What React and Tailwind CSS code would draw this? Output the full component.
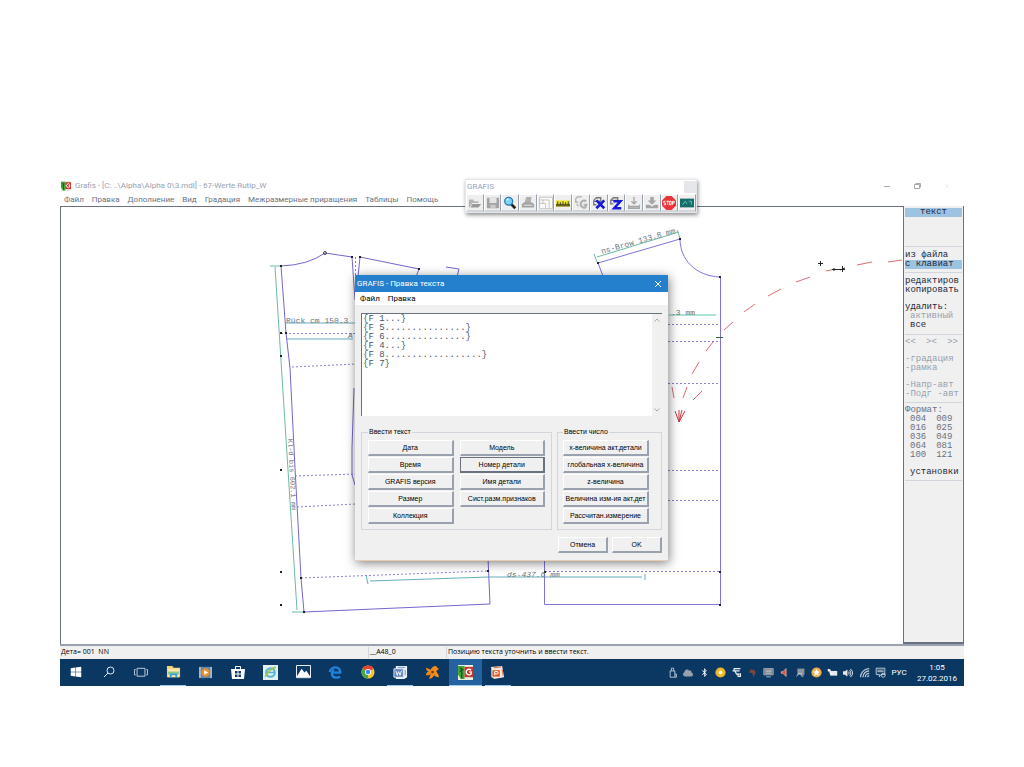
import React from 'react';
import { FaWindows, FaBluetoothB, FaCloud, FaVolumeUp } from 'react-icons/fa';

const menuItems = [
  'Файл',
  'Правка',
  'Дополнение',
  'Вид',
  'Градация',
  'Межразмерные приращения',
  'Таблицы',
  'Помощь',
];

const textButtons = [
  ['Дата', 'Время', 'GRAFIS версия', 'Размер', 'Коллекция'],
  ['Модель', 'Номер детали', 'Имя детали', 'Сист.разм.признаков'],
];

const numberButtons = [
  'x-величина акт.детали',
  'глобальная x-величина',
  'z-величина',
  'Величина изм-ия акт.дет',
  'Рассчитан.измерение',
];

const formats = [
  ['004', '009'],
  ['016', '025'],
  ['036', '049'],
  ['064', '081'],
  ['100', '121'],
];

const templateText = [
  '{F 1...}',
  '{F 5...............}',
  '{F 6...............}',
  '{F 4...}',
  '{F 8..................}',
  '{F 7}',
  '',
].join('\n');

const GrafisLogo = ({ className }) => (
  <svg viewBox="0 0 16 16" className={className}>
    <rect width="16" height="16" fill="#e8efe0" />
    <path d="M0 1h7v14H3l-3-5z" fill="#3fa535" />
    <path d="M2 3l3 2-3 2M4 7v7" stroke="#145c1c" strokeWidth="1.500" fill="none" />
    <rect x="7" y="2" width="9" height="11" fill="#c8352b" />
    <path d="M14 5.500a3 3 0 1 0 0 4V7.500h-2" stroke="#fff" strokeWidth="1.500" fill="none" />
  </svg>
);

/* Toolbar icons, all on a 16x16 grid */
const tools = [
  {
    name: 'Открыть',
    icon: (
      <g fill="#b5b5b5">
        <path d="M1 4h5l1 2h5v2H5l-3 5H1z" />
        <path d="M5 9h10l-3 4H3z" fill="#999" />
      </g>
    ),
  },
  {
    name: 'Сохранить',
    icon: (
      <g>
        <path d="M1 2h14v12H1z" fill="#a3a3a3" />
        <path d="M4 2h8v6H4z" fill="#e4e4e4" />
        <path d="M5 10h6v4H5z" fill="#c9c9c9" />
      </g>
    ),
  },
  {
    name: 'Масштаб',
    icon: (
      <g>
        <path d="M9 9l5 5" stroke="#222" strokeWidth="3" />
        <circle cx="6.500" cy="6" r="4.500" fill="#7fd3f5" stroke="#2478b5" strokeWidth="1.500" />
        <path d="M4 5l2-2" stroke="#fff" strokeWidth="1.500" />
      </g>
    ),
  },
  {
    name: 'Печать',
    icon: (
      <g fill="#a3a3a3">
        <path d="M6 1h6l-1 7H4z" fill="#b0b0b0" />
        <path d="M1 9l3-2h8l3 2v4H1z" />
        <path d="M3 10.500h10" stroke="#eee" />
      </g>
    ),
  },
  {
    name: 'Лист',
    icon: (
      <g fill="#fafafa" stroke="#c0c0c0">
        <path d="M.500 1.500h15v13h-15z" />
        <path d="M.500 4.500h11v10M.500 8.500h7v6M4.500 4.500v4" fill="none" />
      </g>
    ),
  },
  {
    name: 'Измерить',
    icon: (
      <g>
        <path d="M0 5h16v7H0z" fill="#f1e72c" />
        <path d="M0 9h16v3H0z" fill="#6b6612" />
        <path d="M2 6v4M5 7v3M8 6v4M11 7v3M14 6v4" stroke="#333" />
      </g>
    ),
  },
  {
    name: 'Деталь G',
    icon: (
      <g fill="none" stroke="#b0b0b0" strokeWidth="1.500">
        <path d="M2 3l2-2h5M2 3v4h3M3 9l2 3" />
        <path d="M14 6a4 4 0 1 0-1 7l1-3h-3" strokeWidth="2.500" />
      </g>
    ),
  },
  {
    name: 'Деталь X',
    icon: (
      <g fill="none">
        <path d="M2 5l3-3h5v4H2v4h3" stroke="#777" strokeWidth="1.500" />
        <path d="M5 5l9 9M14 5l-9 9" stroke="#1818d8" strokeWidth="3" />
      </g>
    ),
  },
  {
    name: 'Деталь Z',
    icon: (
      <g fill="none">
        <path d="M2 5l3-3h5v3H2v4h3" stroke="#777" strokeWidth="1.500" />
        <path d="M5 6h8l-7 8h8" stroke="#1818d8" strokeWidth="3" />
      </g>
    ),
  },
  {
    name: 'Вставить',
    icon: (
      <g fill="none" stroke="#a5a5a5">
        <path d="M8 1v8M5 6l3 3 3-3" strokeWidth="1.500" />
        <path d="M2 10v4h12v-4M2 12h12" strokeWidth="1.500" />
      </g>
    ),
  },
  {
    name: 'Загрузить',
    icon: (
      <g fill="#a5a5a5">
        <path d="M6 1h4v4h3l-5 5-5-5h3z" />
        <path d="M1 10h4l3 2 3-2h4v4H1z" />
      </g>
    ),
  },
  {
    name: 'Стоп',
    icon: (
      <g>
        <path d="M5 0h6l5 5v6l-5 5H5l-5-5V5z" fill="#e8343a" />
        <path
          d="M4 6H2v2h2v2H2M5 6h3M6.500 6v4M8.500 6h2v4h-2zM12 10V6h2v2h-2"
          stroke="#fff"
          fill="none"
        />
      </g>
    ),
  },
  {
    name: 'Экран',
    icon: (
      <g>
        <path d="M0 3h16v10H0z" fill="#136e6a" />
        <path d="M3 10l3-4 2 3M10 6h3v4" stroke="#6fc9c0" fill="none" />
      </g>
    ),
  },
];

const ToolPalette = () => (
  <div className="absolute left-[405px] top-px w-[232px] border border-gray-200 bg-white shadow-[1px_2px_4px_rgba(0,0,0,0.45)]">
    <div className="flex h-[14px] items-center justify-between pl-px text-[8px] text-gray-400">
      <span>GRAFIS</span>
      <button aria-label="Закрыть панель" className="h-3 w-3 bg-gray-200" />
    </div>
    <div className="grid grid-cols-13 bg-[#efefef]">
      {tools.map((tool) => (
        <button
          key={tool.name}
          aria-label={tool.name}
          className="flex h-[18px] items-center justify-center border-b-2 border-r border-l border-t border-b-gray-300 border-r-gray-400 border-l-white border-t-white"
        >
          <svg viewBox="0 0 16 16" className="h-[14px] w-[14px]">
            {tool.icon}
          </svg>
        </button>
      ))}
    </div>
  </div>
);

/* Pattern pieces drawn in drawing units of the work area */
const Pattern = () => (
  <svg
    viewBox="61 207 842 437"
    preserveAspectRatio="xMinYMin slice"
    className="h-full w-full"
    fill="none"
  >
    {/* dimension lines */}
    <g stroke="#6fb8a6">
      <path d="M270 266h11M275 267L297 610M292 612h12" />
      <path d="M286 323h70M287 339h66" stroke="#6aa9bd" />
      <path d="M366 575l2 9M370 581L488 577H642M645 574v6" stroke="#63b0bb" />
      <path d="M597 257L679 232M594 254l3 8M677 230l3 8" />
      <path d="M669 315h47" stroke="#5cc8a8" />
    </g>

    {/* construction lines */}
    <g stroke="#8a80d8" strokeDasharray="2 2">
      <path d="M281 333.500h75M292 367L356 364M295 476L356 474M297 507L356 504" />
      <path d="M301 578L488 571M355.500 257v20" />
      <path d="M668 324.500h52M668 341.500h52M668 383.500h52M668 470.500h52M668 500.500h52M545 571.500h175" />
    </g>

    {/* back piece */}
    <g stroke="#7466cf">
      <path d="M281 266Q308 265 325 253L352 257L355 300" />
      <path d="M281 266L286 333L290 368L295 468L301 578L304 612L490 604L488 558" />
      <path d="M360 257L419 269L416 277M360 257L358 277M446 267L459 269L457 277" />
      <path d="M354 388L352 448V475L355 485" />
    </g>

    {/* front piece */}
    <g stroke="#7d75da">
      <path d="M603 276L598 263L680 239C680 259 695 276 720 277" />
      <path d="M720.500 277V604.500H544.500V558" />
    </g>
    <path d="M716 337.500h7" stroke="#2f5f3f" />

    <g fill="#222">
      <path d="M280 332h2v2h-2zM280 355h2v2h-2zM280 469h2v2h-2zM280 571h2v2h-2zM280 604h2v2h-2z" />
      <path d="M285 332h2v2h-2zM280 265h2v2h-2zM351 256h2v2h-2zM359 256h2v2h-2zM418 268h2v2h-2z" />
      <path d="M300 577h2v2h-2zM303 611h2v2h-2zM487 570h2v2h-2zM544 571h2v2h-2z" />
      <path d="M597 262h2v2h-2zM679 238h2v2h-2zM719 276h2v2h-2zM719 571h2v2h-2zM719 604h2v2h-2z" />
    </g>
    <circle cx="325" cy="253" r="1.500" stroke="#444" />

    {/* pointer arrow */}
    <g stroke="#e06a72">
      <path d="M902 260L888 262M872 262L857 265M835 269L826 271M810 277L796 282M781 289L768 296M755 304L744 312" />
      <path d="M733 322L724 330M713 342L706 351M699 362L692 374M687 387L683 398M702 391L693 400M672 387L674 398" />
      <path d="M675 411L679 422L685 411M679 410V422M682 410L679 422" stroke="#d8323c" />
    </g>
    <path d="M818 263.500h5M820.500 261v5M832 269.500h13M842.500 266v6M834 268v3M840 270l5-2" stroke="#222" />

    {/* dimension labels */}
    <g fill="#6b7682" fontSize="8" className="font-['Liberation_Mono']">
      <text x="286" y="323">Rück cm 150.3</text>
      <text x="348" y="338" fontStyle="italic">
        A
      </text>
      <text transform="translate(288 439) rotate(87)" fontSize="7">
        Kl-d bis 602.1 mm
      </text>
      <text transform="translate(602 254) rotate(-16)">ns-Brow 133.8 mm</text>
      <text x="671" y="315">.3 mm</text>
      <text x="507" y="577" fontStyle="italic">
        ds-437.6 mm
      </text>
    </g>
  </svg>
);

const SideItem = ({ children, muted, active, indent }) => (
  <button
    className={`block h-[9px] w-full whitespace-pre text-left ${indent ? 'pl-[5px]' : ''} ${
      active ? 'bg-[#9dc3e3]' : ''
    } ${muted ? 'text-gray-400' : 'text-gray-800'}`}
  >
    {children}
  </button>
);

const SidePanel = () => (
  <aside className="w-[61px] shrink-0 border-b-2 border-r border-l border-gray-500 bg-[#f0f0f0] pl-px pr-px pt-[2px] font-['Liberation_Mono',monospace] text-[9px] leading-[9px]">
    <div className="h-[39px] border-b border-gray-300">
      <div className="h-[9px] bg-[#9dc3e3] text-center text-gray-800">текст</div>
    </div>
    <div className="border-b border-gray-300 pb-[3px] pt-1">
      <SideItem>из файла</SideItem>
      <SideItem active>с клавиат</SideItem>
    </div>
    <div className="border-b border-gray-300 py-1">
      <SideItem>редактиров</SideItem>
      <SideItem>копировать</SideItem>
      <div className="pt-2 text-gray-800">удалить:</div>
      <SideItem indent muted>активный</SideItem>
      <SideItem indent>все</SideItem>
    </div>
    <div className="border-b border-gray-300 pb-[3px] pt-[3px]">
      <div className="flex justify-between pr-1 text-gray-400">
        <button>&lt;&lt;</button>
        <button>&gt;&lt;</button>
        <button>&gt;&gt;</button>
      </div>
      <div className="pt-2">
        <SideItem muted>-градация</SideItem>
        <SideItem muted>-рамка</SideItem>
      </div>
      <div className="pt-2">
        <SideItem muted>-Напр-авт</SideItem>
        <SideItem muted>-Подг -авт</SideItem>
      </div>
    </div>
    <div className="border-b border-gray-300 pb-[3px] pt-[3px]">
      <div className="text-gray-500">Формат:</div>
      {formats.map(([a, b]) => (
        <div key={a} className="flex gap-[10px] pl-[5px] text-gray-500">
          <button>{a}</button>
          <button>{b}</button>
        </div>
      ))}
      <div className="pt-2">
        <SideItem indent>установки</SideItem>
      </div>
    </div>
  </aside>
);

const DialogButton = ({ children, focused }) => (
  <button
    className={`flex h-4 w-full items-center justify-center whitespace-nowrap border-b-2 border-r-2 border-l border-t text-[7px] leading-[12px] text-black ${
      focused
        ? 'border-gray-500'
        : 'border-b-gray-400 border-r-gray-400 border-l-white border-t-white'
    }`}
  >
    {children}
  </button>
);

const TextDialog = () => (
  <div
    role="dialog"
    aria-label="Правка текста"
    className="absolute left-[295px] top-[97px] w-[313px] border-b border-[#e8cdb5] bg-[#f0f0f0] font-['Liberation_Sans',sans-serif] text-[7px] text-black shadow-[1px_2px_10px_rgba(0,0,0,0.5)]"
  >
    <div className="flex h-[17px] items-center justify-between bg-[#2480cc] pl-[2px] pr-[6px] font-['Roboto',sans-serif] text-[8px] text-white">
      <span>GRAFIS - Правка текста</span>
      <button aria-label="Закрыть">
        <svg viewBox="0 0 8 8" className="h-2 w-2" stroke="#fff" fill="none">
          <path d="M1 1l6 6M7 1L1 7" />
        </svg>
      </button>
    </div>
    <div className="flex h-[13px] items-center gap-2 bg-white pl-[5px] font-['Roboto',sans-serif] text-[8px]">
      <button>Файл</button>
      <button>Правка</button>
    </div>

    <div className="px-[6px] pb-[7px] pt-2">
      <div className="flex h-[103px] border-l border-t border-gray-500 bg-white">
        <textarea
          aria-label="Текст"
          spellCheck={false}
          defaultValue={templateText}
          className="h-full flex-1 resize-none overflow-hidden bg-white px-px pt-px font-['Liberation_Mono',monospace] text-[9px] leading-[9px] text-gray-600 outline-none"
        />
        <div className="flex w-[10px] flex-col justify-between bg-[#f0f0f0] py-[3px]">
          <svg viewBox="0 0 10 6" className="w-[10px]" stroke="#aaa" fill="none">
            <path d="M2.500 4.500L5 2l2.500 2.500" />
          </svg>
          <svg viewBox="0 0 10 6" className="w-[10px]" stroke="#aaa" fill="none">
            <path d="M2.500 1.500L5 4l2.500-2.500" />
          </svg>
        </div>
      </div>

      <div className="mt-[11px] flex gap-[5px]">
        <fieldset className="min-w-0 flex-1 border border-gray-300 px-[6px] pb-[5px]">
          <legend className="px-px leading-[10px]">Ввести текст</legend>
          <div className="flex gap-[6px] pt-[3px]">
            {textButtons.map((column, i) => (
              <div key={i} className="flex min-w-0 flex-1 flex-col gap-px">
                {column.map((label) => (
                  <DialogButton key={label} focused={label === 'Номер детали'}>
                    {label}
                  </DialogButton>
                ))}
              </div>
            ))}
          </div>
        </fieldset>
        <fieldset className="w-[105px] min-w-0 shrink-0 border border-gray-300 pb-[5px] pl-[5px] pr-3">
          <legend className="px-px leading-[10px]">Ввести число</legend>
          <div className="flex flex-col gap-px pt-[3px]">
            {numberButtons.map((label) => (
              <DialogButton key={label}>{label}</DialogButton>
            ))}
          </div>
        </fieldset>
      </div>

      <div className="mt-[7px] flex justify-end gap-1">
        <div className="w-[50px]">
          <DialogButton>Отмена</DialogButton>
        </div>
        <div className="w-[50px]">
          <DialogButton>OK</DialogButton>
        </div>
      </div>
    </div>
  </div>
);

const taskbarApps = [
  { name: 'Пуск', icon: <FaWindows className="h-3 w-3 text-white" /> },
  {
    name: 'Поиск',
    icon: (
      <svg viewBox="0 0 12 12" className="w-3" fill="none" stroke="#e5e9ee">
        <circle cx="7.500" cy="4.500" r="3.500" />
        <path d="M5 7L1 11" />
      </svg>
    ),
  },
  {
    name: 'Представление задач',
    icon: (
      <svg viewBox="0 0 16 12" className="w-[14px]" fill="none" stroke="#d5dde5">
        <path d="M3.500 1.500h9v9h-9zM2 3H.500v6H2M14 3h1.500v6H14" />
      </svg>
    ),
  },
  {
    name: 'Проводник',
    open: true,
    icon: (
      <svg viewBox="0 0 16 14" className="w-[15px]">
        <path d="M1 1h6l1 2h7v10H1z" fill="#f3d377" />
        <path d="M2 4h12v9H2z" fill="#f9eaa9" />
        <path d="M2 7h12v3H2z" fill="#8dc886" />
        <path d="M4 9h8v4h-2v-2H6v2H4z" fill="#3c9fd8" />
      </svg>
    ),
  },
  {
    name: 'Проигрыватель',
    icon: (
      <svg viewBox="0 0 14 14" className="w-[13px]">
        <path d="M0 1h14v12H0z" fill="#a8b7c4" />
        <path d="M2 1h10v12H2z" fill="#6289ac" />
        <circle cx="7" cy="7" r="4.500" fill="#ee8d2c" />
        <path d="M5.500 4.500L10 7l-4.500 2.500z" fill="#fff" />
      </svg>
    ),
  },
  {
    name: 'Магазин',
    icon: (
      <svg viewBox="0 0 14 16" className="w-[14px]">
        <path d="M4.500 5V2.500h5V5" stroke="#fff" fill="none" />
        <path d="M0 5h14l-1 10H1z" fill="#fff" />
        <path d="M4 7h2.500v2.500H4zM7.500 7H10v2.500H7.500zM4 10.500h2.500V13H4zM7.500 10.500H10V13H7.500z" fill="#0d3a66" />
      </svg>
    ),
  },
  {
    name: 'Интернет',
    icon: (
      <svg viewBox="0 0 14 14" className="w-[15px]">
        <path d="M0 0h14v14H0z" fill="#e4eff2" />
        <circle cx="7" cy="7" r="4" fill="none" stroke="#54b5d6" strokeWidth="2" />
        <path d="M4 7h7" stroke="#54b5d6" strokeWidth="1.500" />
        <path d="M2 11c3-6 6-8 10-9" stroke="#9ac651" strokeWidth="1.500" fill="none" />
      </svg>
    ),
  },
  {
    name: 'Фотографии',
    icon: (
      <svg viewBox="0 0 16 14" className="w-[15px]">
        <path d="M.500.500h15v13H.500z" fill="#0d3a66" stroke="#fff" />
        <path d="M1 12l5-8 3 4 2-2 4 6v1H1z" fill="#fff" />
      </svg>
    ),
  },
  {
    name: 'Edge',
    icon: (
      <svg viewBox="0 0 16 16" className="w-[15px]" fill="none" stroke="#1f83dc">
        <path d="M4.500 8.200H13C13.200 4.500 11 2.500 8.300 2.500C5 2.500 2.500 4.500 1.800 7.500" strokeWidth="2.500" />
        <path d="M6.500 5.200C3 7.500 3.500 13.500 8.500 13.500C10.500 13.500 11.800 13.200 13 12.500" strokeWidth="2.500" />
      </svg>
    ),
  },
  {
    name: 'Chrome',
    icon: (
      <svg viewBox="0 0 16 16" className="w-[14px]">
        <circle cx="8" cy="8" r="7.500" fill="#f4c62f" />
        <path d="M8 8L1.500 4.200A7.500 7.500 0 0 1 14.500 4.200z" fill="#e04536" />
        <path d="M8 8L1.500 4.200A7.500 7.500 0 0 0 8 15.500z" fill="#4aa552" />
        <circle cx="8" cy="8" r="3.500" fill="#fff" />
        <circle cx="8" cy="8" r="2.600" fill="#4687ea" />
      </svg>
    ),
  },
  {
    name: 'Word',
    open: true,
    icon: (
      <svg viewBox="0 0 16 16" className="w-[15px]" fill="none">
        <path d="M3 1h12v12l-3 2H3z" fill="#f0f4fa" />
        <path d="M1 4h10v9H1z" fill="#5b80bd" stroke="#e2eaf5" />
        <path d="M3 6l1.500 5L6 7l1.500 4L9 6" stroke="#fff" />
        <path d="M5 2.500h8M13 5v6" stroke="#6b8ec6" />
      </svg>
    ),
  },
  {
    name: 'Avast',
    icon: (
      <svg viewBox="0 0 16 16" className="w-[15px]">
        <path
          d="M1 3q3 1 5 2q2-4 5-4q2 0 2 2l2 1q-2 1-3 3q3 3 3 6q-4 0-5-2q-2 3-5 4q-1-1 1-5q-2 1-5 1q0-3 3-4q-3-1-3-4z"
          fill="#f08c1b"
        />
        <circle cx="8" cy="7.500" r="1.500" fill="#7c3c08" />
      </svg>
    ),
  },
  { name: 'Grafis', open: true, active: true, icon: <GrafisLogo className="w-[15px]" /> },
  {
    name: 'PowerPoint',
    open: true,
    icon: (
      <svg viewBox="0 0 16 16" className="w-[15px]" fill="none">
        <path d="M1 2l12-1 2 12-11 2z" fill="#f9e2d8" />
        <path d="M2 5h9v8H2z" fill="#d8592f" stroke="#fff" />
        <path d="M5 11V7h2.500a1 1 0 0 1 0 2.500H5" stroke="#fff" />
        <path d="M4 3l8-1M13 5l1 6" stroke="#dd6a42" />
      </svg>
    ),
  },
];

const trayIcons = [
  {
    name: 'Флеш-накопитель',
    icon: <path d="M4 5h6v8H4zM5.500 5V1.500h3V5M10 9h2v4h-2" fill="none" stroke="#d8e0e8" />,
  },
  { name: 'OneDrive', node: <FaCloud className="h-[10px] w-[10px] text-gray-400" /> },
  { name: 'Bluetooth', node: <FaBluetoothB className="h-[9px] w-[9px] text-white" /> },
  {
    name: 'Обновление',
    icon: (
      <g>
        <circle cx="7" cy="7" r="6.500" fill="#eeb52e" />
        <circle cx="7" cy="7" r="2.500" fill="#fff3c4" />
      </g>
    ),
  },
  {
    name: 'Синхронизация',
    icon: <path d="M12 2H4v3h7M2 5h3l2 4h4M9 8v4h3V8" fill="none" stroke="#e8eef4" strokeWidth="1.500" />,
  },
  { name: 'Служба', icon: <path d="M4 3l6 1 1 4-3 5-1-5-4-1z" fill="#77483d" /> },
  {
    name: 'Монитор',
    icon: (
      <g>
        <path d="M1 2h12v8H1z" fill="#707b84" stroke="#aeb7be" />
        <path d="M3 4h8M3 6h8M3 8h8M4 12.500h6" stroke="#c9d0d5" />
      </g>
    ),
  },
  { name: 'Звук AMD', icon: <path d="M3 6h2l4-4v10L5 8H3z" fill="#e0503f" stroke="#f3b1a5" /> },
  {
    name: 'Принтер',
    icon: (
      <g>
        <path d="M3 2h9v8H3z" fill="#8b959e" />
        <path d="M2 12l3-4h3v4M10 10v3" stroke="#cfd6dc" fill="none" />
      </g>
    ),
  },
  {
    name: 'Защита',
    icon: (
      <g>
        <circle cx="7" cy="7" r="6.500" fill="#f0ae4b" />
        <path d="M7 2.500l1.500 3 3 .500-2.500 2 1 3.500-3-2-3 2 1-3.500L2.500 6l3-.500z" fill="#fff" />
      </g>
    ),
  },
  {
    name: 'Батарея',
    icon: (
      <g>
        <path d="M4 5h9v6H4z" fill="#e6ebf0" />
        <path d="M1 3l3 1v4l3 1M1 5h3" stroke="#fff" fill="none" strokeWidth="1.500" />
      </g>
    ),
  },
  { name: 'Громкость', node: <FaVolumeUp className="h-[10px] w-[10px] text-gray-200" /> },
  {
    name: 'Сеть',
    icon: (
      <path
        d="M2 13A11 11 0 0 1 13 2M5 13a8 8 0 0 1 8-8M8 13a5 5 0 0 1 5-5M11 13a2 2 0 0 1 2-2"
        fill="none"
        stroke="#c6d0da"
        strokeWidth="1.500"
      />
    ),
  },
  {
    name: 'Уведомления',
    icon: (
      <g fill="none" stroke="#e4eaf0">
        <path d="M1.500 1.500h11v8h-5l-2 3v-3h-4zM3 4h8M3 6h8" />
        <circle cx="10.500" cy="10.500" r="2.500" />
      </g>
    ),
  },
];

const Taskbar = () => (
  <footer className="flex h-[27px] items-stretch justify-between bg-[#0b3763] text-white">
    <nav aria-label="Панель задач" className="grid w-[454px] grid-cols-14">
      {taskbarApps.map((app) => (
        <button
          key={app.name}
          aria-label={app.name}
          className={`flex flex-col items-center ${app.active ? 'bg-[#2463a0]' : ''}`}
        >
          <span className="flex flex-1 items-center">{app.icon}</span>
          <span
            className={`h-px ${app.open ? 'bg-[#9cc9ee]' : ''} ${app.active ? 'w-full' : 'w-[26px]'}`}
          />
        </button>
      ))}
    </nav>
    <div className="flex items-center">
      <div className="flex">
        {trayIcons.map((item) => (
          <button
            key={item.name}
            aria-label={item.name}
            className="flex h-4 w-4 items-center justify-center"
          >
            {item.node || (
              <svg viewBox="0 0 14 14" className="h-[11px] w-[11px]">
                {item.icon}
              </svg>
            )}
          </button>
        ))}
      </div>
      <button className="w-[22px] text-[8px]">РУС</button>
      <time className="w-[54px] text-center text-[8px] leading-[11px]">
        1:05
        <br />
        27.02.2016
      </time>
    </div>
  </footer>
);

const App = () => {
  return (
    <div className="min-h-screen bg-white px-[60px] pt-[178px] font-['Roboto',sans-serif]">
      <main className="relative">
        {/* Window caption */}
        <header className="flex h-[15px] items-center justify-between text-[8px] text-gray-400">
          <div className="flex items-center gap-1 pl-px">
            <GrafisLogo className="h-[10px] w-[10px]" />
            <h1>Grafis - [C: ..\Alpha\Alpha 0\3.mdl] - 67-Werte Rutip_W</h1>
          </div>
          <div className="flex items-center gap-[22px] pr-[13px]">
            <button aria-label="Свернуть">
              <svg viewBox="0 0 8 8" className="h-2 w-2" stroke="#aaa">
                <path d="M1 4.500h6" />
              </svg>
            </button>
            <button aria-label="Развернуть">
              <svg viewBox="0 0 8 8" className="h-2 w-2" stroke="#aaa" fill="none">
                <path d="M1.500 2.500h5v4h-5zM2.500 1.500h5v4" />
              </svg>
            </button>
            <button aria-label="Закрыть">
              <svg viewBox="0 0 8 8" className="h-2 w-2" stroke="#eee">
                <path d="M2 2l4 4M6 2L2 6" />
              </svg>
            </button>
          </div>
        </header>

        <nav className="flex h-[13px] items-center gap-2 pl-1 text-[8px] text-gray-500">
          {menuItems.map((item) => (
            <button key={item}>{item}</button>
          ))}
        </nav>

        {/* Work area */}
        <div className="flex h-[438px]">
          <div className="min-w-0 flex-1 overflow-hidden border-l border-t border-gray-500">
            <Pattern />
          </div>
          <SidePanel />
        </div>

        {/* Status bar */}
        <div className="flex h-[15px] items-center border-t-2 border-gray-400 bg-[#f0f0f0] font-['Open_Sans',sans-serif] text-[7px] text-black">
          <div className="w-[308px] pl-px">Дета= 001&nbsp; NN</div>
          <div className="w-[78px] border-l border-gray-300 pl-px">__A48_0</div>
          <div className="flex-1 border-l border-gray-300 pl-px">
            Позицию текста уточнить и ввести текст.
          </div>
        </div>

        <Taskbar />

        <ToolPalette />
        <TextDialog />
      </main>
    </div>
  );
};

export default App;
